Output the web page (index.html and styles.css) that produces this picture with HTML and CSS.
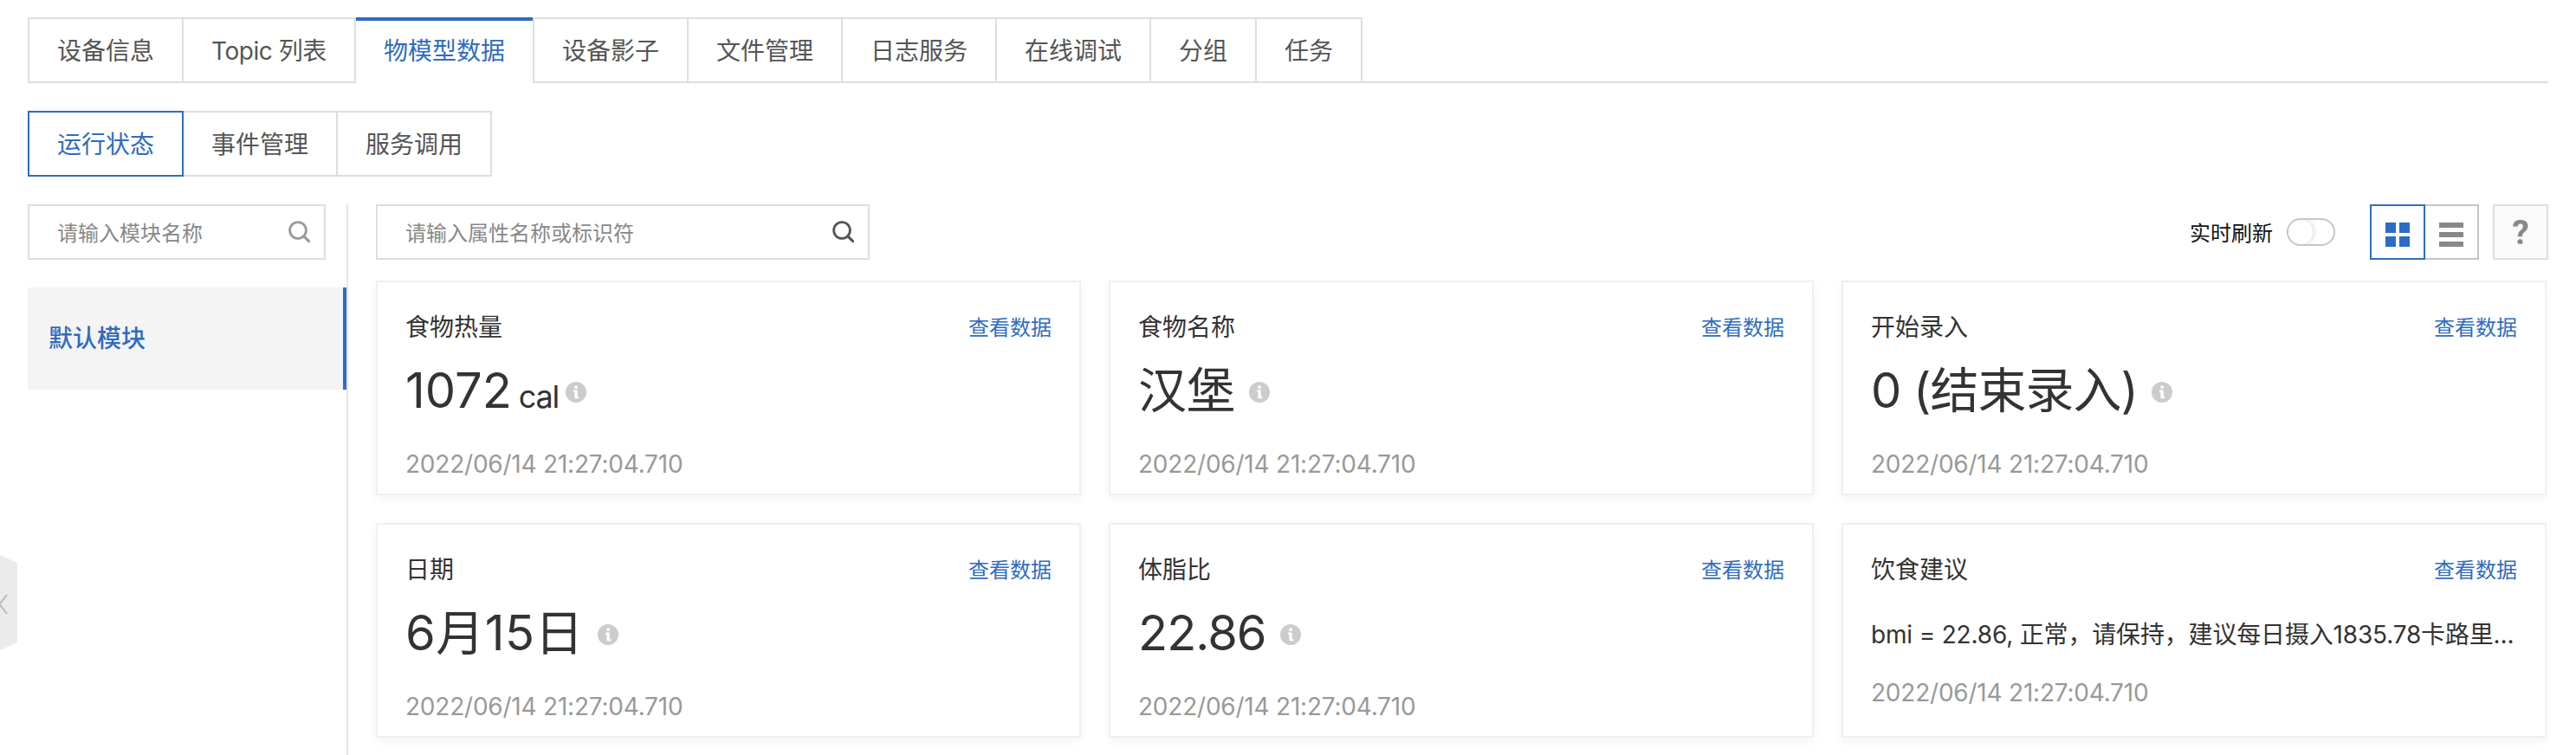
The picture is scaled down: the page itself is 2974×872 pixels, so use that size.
FILE: index.html
```html
<!DOCTYPE html>
<html lang="zh-CN">
<head>
<meta charset="utf-8">
<title>物模型数据</title>
<link rel="stylesheet" href="styles.css">
</head>
<body>
<svg class="sprite" aria-hidden="true">
  <symbol id="search" viewBox="0 0 26 26">
    <circle cx="11" cy="11" r="9.4" fill="none" stroke="currentColor" stroke-width="2.8"/>
    <path d="M17.6 17.6 L23.6 23.6" stroke="currentColor" stroke-width="3" stroke-linecap="round"/>
  </symbol>
  <symbol id="info" viewBox="0 0 24 24">
    <circle cx="12" cy="12" r="12" fill="currentColor"/>
    <path d="M10.4 4.6h3.4v3.2h-3.4zM9 9.6h4.8v7.6h1.6v2h-5v-7.4H9z" fill="#fff"/>
  </symbol>
</svg>
<div class="page">
  <nav class="tabs">
    <a class="tab">设备信息</a>
    <a class="tab tab-topic">Topic 列表</a>
    <a class="tab active">物模型数据</a>
    <a class="tab">设备影子</a>
    <a class="tab">文件管理</a>
    <a class="tab">日志服务</a>
    <a class="tab">在线调试</a>
    <a class="tab">分组</a>
    <a class="tab">任务</a>
    <span class="tabs-rest"></span>
  </nav>
  <nav class="subtabs">
    <a class="subtab active">运行状态</a>
    <a class="subtab">事件管理</a>
    <a class="subtab">服务调用</a>
  </nav>
  <div class="content">
    <aside class="side">
      <div class="search search-side"><span class="placeholder">请输入模块名称</span><svg class="search-icon"><use href="#search"/></svg></div>
      <div class="module">默认模块</div>
    </aside>
    <main class="main">
      <div class="toolbar">
        <div class="search search-main"><span class="placeholder">请输入属性名称或标识符</span><svg class="search-icon"><use href="#search"/></svg></div>
        <div class="tools">
          <span class="refresh">实时刷新</span>
          <span class="switch"><span class="knob"></span></span>
          <div class="views">
            <span class="view view-on"><svg width="28" height="28" viewBox="0 0 28 28" fill="currentColor"><path d="M0 0h12v12H0zM16 0h12v12H16zM0 16h12v12H0zM16 16h12v12H16z"/></svg></span>
            <span class="view view-off"><svg width="28" height="28" viewBox="0 0 28 28" fill="currentColor"><path d="M0 0h28v6H0zM0 11h28v6H0zM0 22h28v6H0z"/></svg></span>
          </div>
          <span class="help">?</span>
        </div>
      </div>
      <div class="cards">
        <section class="card">
          <header class="card-head"><span>食物热量</span><a class="link">查看数据</a></header>
          <div class="value"><span class="num">1072</span><span class="unit">cal</span><svg class="info info-near"><use href="#info"/></svg></div>
          <div class="time">2022/06/14 21:27:04.710</div>
        </section>
        <section class="card">
          <header class="card-head"><span>食物名称</span><a class="link">查看数据</a></header>
          <div class="value"><span class="num">汉堡</span><svg class="info"><use href="#info"/></svg></div>
          <div class="time">2022/06/14 21:27:04.710</div>
        </section>
        <section class="card">
          <header class="card-head"><span>开始录入</span><a class="link">查看数据</a></header>
          <div class="value"><span class="num num-tight">0 (结束录入)</span><svg class="info"><use href="#info"/></svg></div>
          <div class="time">2022/06/14 21:27:04.710</div>
        </section>
        <section class="card">
          <header class="card-head"><span>日期</span><a class="link">查看数据</a></header>
          <div class="value"><span class="num num-date">6月15日</span><svg class="info"><use href="#info"/></svg></div>
          <div class="time">2022/06/14 21:27:04.710</div>
        </section>
        <section class="card">
          <header class="card-head"><span>体脂比</span><a class="link">查看数据</a></header>
          <div class="value"><span class="num num-tight">22.86</span><svg class="info"><use href="#info"/></svg></div>
          <div class="time">2022/06/14 21:27:04.710</div>
        </section>
        <section class="card">
          <header class="card-head"><span>饮食建议</span><a class="link">查看数据</a></header>
          <div class="value-text">bmi = 22.86, 正常，请保持，建议每日摄入1835.78卡路里...</div>
          <div class="time">2022/06/14 21:27:04.710</div>
        </section>
      </div>
    </main>
  </div>
  <svg class="handle" width="20" height="110" viewBox="0 0 20 110">
    <path d="M0 0 L20 9 V101 L0 110z" fill="#ebebeb"/>
    <path d="M8 46 L-0.5 57 L8 68" fill="none" stroke="#b8b8b8" stroke-width="2"/>
  </svg>
</div>
</body>
</html>
```
FILE: styles.css
```css
* { box-sizing: border-box; }
body {
  margin: 0;
  background: #fff;
  color: #333;
  font-family: Inter, "Noto Sans CJK SC", sans-serif;
  font-size: 28px;
}
.sprite { position: absolute; width: 0; height: 0; }
.page {
  position: relative;
  display: flex;
  flex-direction: column;
  height: 872px;
  padding: 20px 32px 0;
  overflow: hidden;
}
.tabs { display: flex; height: 76px; }
.tab {
  flex: none;
  padding: 0 32px;
  border: solid #dedede;
  border-width: 2px 2px 2px 0;
  line-height: 74px;
  color: #555;
  white-space: nowrap;
}
.tab:first-child { border-left-width: 2px; }
.tab-topic { width: 199px; letter-spacing: -0.45px; }
.tab.active {
  width: 206px;
  color: #2f6cc0;
  border-bottom-color: transparent;
  border-bottom-width: 0;
  border-top: 0;
  line-height: 78px;
  background: linear-gradient(#2f6cc0, #2f6cc0) top left / 204px 4px no-repeat;
}
.tabs-rest { flex: 1; border-bottom: 2px solid #dedede; }
.subtabs { display: flex; margin-top: 32px; }
.subtab {
  width: 178px;
  height: 76px;
  padding-left: 32px;
  border: 2px solid #dedede;
  border-left: 0;
  line-height: 74px;
  color: #555;
}
.subtab.active { width: 180px; border: 2px solid #2f6cc0; color: #2f6cc0; }
.content { display: flex; flex: 1; margin-top: 32px; }
.side { width: 370px; border-right: 2px solid #e6e6e6; }
.search {
  display: flex;
  align-items: center;
  justify-content: space-between;
  height: 64px;
  padding: 0 15px 0 32px;
  border: 2px solid #dedede;
  font-size: 24px;
  color: #888;
}
.placeholder { padding-bottom: 2px; }
.search-icon { width: 26px; height: 26px; }
.search-side { width: 344px; }
.search-side .search-icon { color: #999; }
.search-main { width: 570px; }
.search-main .search-icon { color: #555; }
.module {
  height: 118px;
  margin-top: 32px;
  padding-left: 24px;
  border-right: 4px solid #2f6cc8;
  background: #f4f4f4;
  line-height: 119px;
  font-weight: 500;
  color: #2f6cc0;
}
.main { flex: 1; padding-left: 32px; }
.toolbar { display: flex; justify-content: space-between; }
.tools { display: flex; align-items: center; }
.refresh { padding-bottom: 2px; font-size: 24px; color: #111; }
.switch {
  width: 56px;
  height: 32px;
  margin: 0 40px 0 16px;
  border: 2px solid #c4c6cf;
  border-radius: 16px;
  overflow: hidden;
}
.knob {
  display: block;
  width: 28px;
  height: 28px;
  border-radius: 50%;
  background: #fff;
  box-shadow: 2px 0 5px rgba(0, 0, 0, 0.13);
}
.views { display: flex; }
.view {
  display: flex;
  justify-content: center;
  height: 64px;
  padding-top: 19px;
  border: 2px solid #c6c6c6;
}
.view-on { width: 64px; border-color: #2f6cc0; color: #2c6bc7; }
.view-off { width: 62px; border-left: 0; color: #888; }
.help {
  width: 64px;
  height: 64px;
  margin-left: 16px;
  border: 2px solid #dedede;
  background: #fafafa;
  font: bold 39px/62px Roboto, sans-serif;
  text-align: center;
  color: #888;
}
.cards {
  display: grid;
  grid-template-columns: repeat(3, 814px);
  gap: 32px;
  margin-top: 24px;
}
.card {
  height: 248px;
  padding: 30px 32px 0;
  border: 2px solid #f0f0f0;
  background: #fff;
  box-shadow: 0 4px 10px rgba(0, 0, 0, 0.05);
}
.card-head {
  display: flex;
  align-items: center;
  justify-content: space-between;
  height: 40px;
}
.link { font-size: 24px; color: #2f6cc0; }
.value { display: flex; align-items: baseline; height: 84px; margin-top: 13px; line-height: 84px; }
.num { font-size: 56px; }
.num-tight { letter-spacing: -1px; }
.num-date { letter-spacing: 0.5px; }
.unit { margin-left: 8px; font-size: 36px; letter-spacing: -1.2px; }
.info { align-self: flex-start; width: 24px; height: 24px; margin: 32px 0 0 16px; color: #ccc; }
.info-near { margin-left: 8px; }
.value-text { height: 44px; margin-top: 35px; line-height: 44px; letter-spacing: -0.17px; white-space: nowrap; }
.time { margin-top: 23px; line-height: 40px; letter-spacing: -0.22px; color: #999; }
.value-text + .time { margin-top: 25px; }
.handle { position: absolute; left: 0; top: 641px; }
```
